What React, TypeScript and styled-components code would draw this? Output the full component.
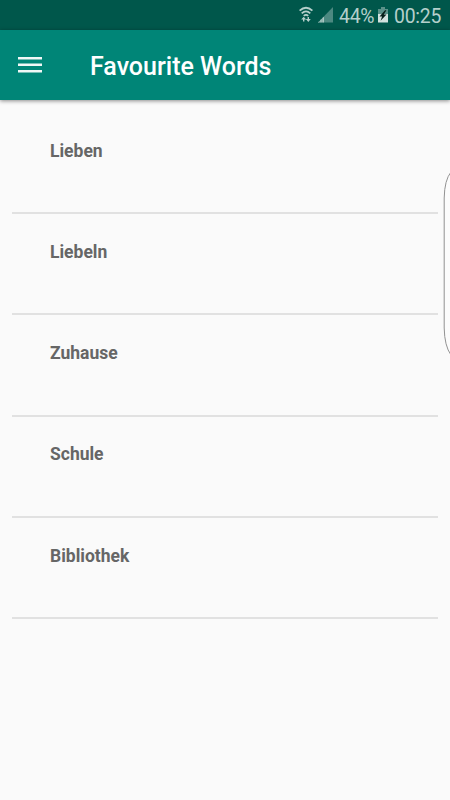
import React from "react";
import styled, { createGlobalStyle } from "styled-components";

const GlobalStyle = createGlobalStyle`
  * { box-sizing: border-box; }
  body { margin: 0; background: #fafafa; font-family: Roboto, "Liberation Sans", sans-serif; }
`;

const Screen = styled.div`
  position: relative;
  width: 450px;
  height: 800px;
  overflow: hidden;
  display: flex;
  flex-direction: column;
  background: #fafafa;
`;

const StatusBar = styled.div`
  height: 30px;
  flex: none;
  display: flex;
  justify-content: flex-end;
  padding-right: 9px;
  background: #00574b;
  color: #b5cfcb;
`;

const StatusIcon = styled.svg<{ $gap: number }>`
  display: block;
  flex: none;
  height: 30px;
  margin-right: ${(p) => p.$gap}px;
`;

const StatusText = styled.span<{ $width: number; $gap?: number }>`
  width: ${(p) => p.$width}px;
  margin-right: ${(p) => p.$gap ?? 0}px;
  font-size: 19.4px;
  letter-spacing: -0.25px;
  line-height: 33px;
  white-space: nowrap;
`;

const AppBar = styled.header`
  height: 70px;
  flex: none;
  display: flex;
  align-items: center;
  padding-left: 18px;
  background: #008577;
  box-shadow: 0 1px 4px rgba(0, 0, 0, 0.45);
`;

const MenuButton = styled.button`
  display: block;
  width: 24px;
  height: 18px;
  padding: 0;
  border: 0;
  background: none;
  svg { display: block; }
`;

const Title = styled.h1`
  margin: 4px 0 0 48px;
  font-size: 25px;
  line-height: 30px;
  font-weight: 500;
  color: #fff;
  white-space: nowrap;
`;

const WordList = styled.ul`
  list-style: none;
  margin: 12.8px 12.4px 0;
  padding: 0;
`;

const WordRow = styled.li`
  height: 101.25px;
  display: flex;
  flex-direction: column;
  justify-content: space-between;
  padding-top: 27.85px;
`;

const Word = styled.span`
  padding-left: 37.6px;
  font-size: 17.5px;
  line-height: 21px;
  font-weight: 700;
  color: #666;
`;

const Divider = styled.div`
  height: 2px;
  background: #e1e1e1;
`;

const EdgeHandle = styled.svg`
  position: absolute;
  right: 0;
  top: 168px;
`;

const words = ["Lieben", "Liebeln", "Zuhause", "Schule", "Bibliothek"];

export default function App() {
  return (
    <Screen>
      <GlobalStyle />
      <StatusBar>
        <StatusIcon $gap={5} width="14" viewBox="0 0 14 30" fill="none" stroke="#b5cfcb" strokeWidth="1.8">
          <path d="M.6 10.6Q7 5 13.4 10.6M2.7 13.3Q7 9.4 11.3 13.3M4.8 15.9Q7 13.8 9.2 15.9" />
          <path d="M4.7 21.5v-3M9.3 17v3" strokeWidth="1.4" />
          <path d="M2.2 19.6L4.7 16.8l2.5 2.8zM6.8 19l2.5 3 2.5-3z" fill="#b5cfcb" stroke="none" />
        </StatusIcon>
        <StatusIcon $gap={6} width="15" viewBox="0 0 15 30">
          <path d="M0 22.5L15 7v15.5z" fill="#4c8981" />
          <path d="M0 22.5l1.5-1.5v1.5zM2.4 22.5V20l1.2-1.2v3.7z" fill="#c4dbd7" />
          <path d="M4.5 22.5v-4.6l1.2-1.2v5.8z" fill="#d2e1de" />
        </StatusIcon>
        <StatusText $width={35} $gap={4}>44%</StatusText>
        <StatusIcon $gap={6} width="10" viewBox="0 0 10 30">
          <path d="M3 7h4v2h3v6H0V9h3z" fill="#5b9189" />
          <path d="M0 14h10v8.5H0z" fill="#d2e1de" />
          <path d="M7 10.2L1.5 16.4h2.6l-1.5 4.4 5.9-6.2H5.8l2.6-4.4z" fill="#071f1a" />
        </StatusIcon>
        <StatusText $width={47}>00:25</StatusText>
      </StatusBar>
      <AppBar>
        <MenuButton aria-label="Menu">
          <svg width="24" height="18" viewBox="0 0 24 18" fill="#f0f7f6">
            <path d="M0 1h24v2.5H0zM0 7.5h24V10H0zM0 14.1h24v2.5H0z" />
          </svg>
        </MenuButton>
        <Title>Favourite Words</Title>
      </AppBar>
      <WordList>
        {words.map((word) => (
          <WordRow key={word}>
            <Word>{word}</Word>
            <Divider />
          </WordRow>
        ))}
      </WordList>
      <EdgeHandle width="7" height="190" viewBox="0 0 7 190" fill="#fcfcfc" stroke="#929292" strokeWidth="1">
        <path d="M8 4Q1.5 12 1.2 30V160Q1.5 178 8 187" />
      </EdgeHandle>
    </Screen>
  );
}
